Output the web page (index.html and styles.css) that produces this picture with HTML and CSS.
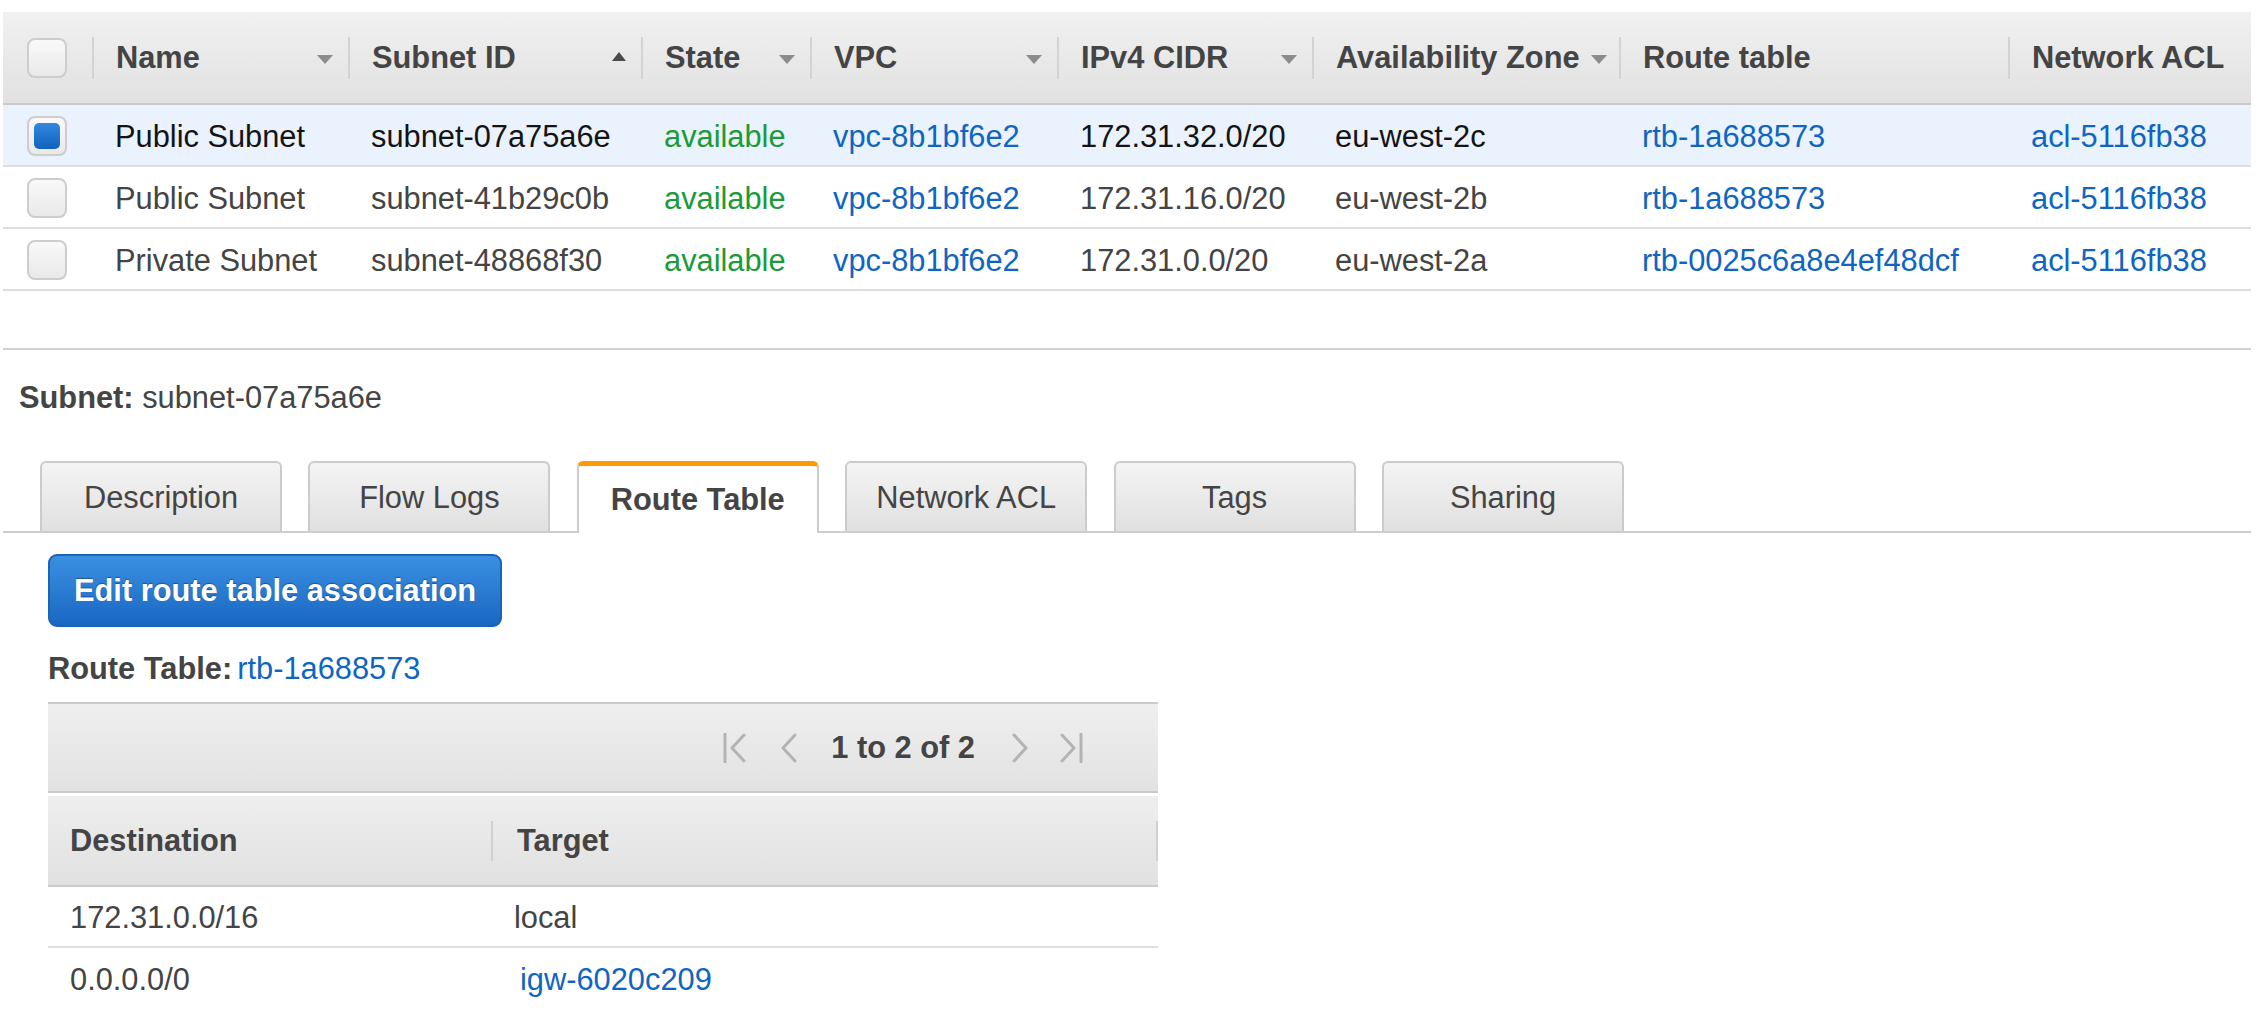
FILE: index.html
```html
<!DOCTYPE html>
<html lang="en">
<head>
<meta charset="utf-8">
<title>Subnets</title>
<link rel="stylesheet" href="styles.css">
</head>
<body>
<div class="grid">
  <div class="thead">
    <div class="cell-chk"><span class="chk"></span></div>
    <div class="th"><span>Name</span><span class="arr"></span></div>
    <div class="th"><span>Subnet ID</span><span class="arr up"></span></div>
    <div class="th"><span>State</span><span class="arr"></span></div>
    <div class="th"><span>VPC</span><span class="arr"></span></div>
    <div class="th"><span>IPv4 CIDR</span><span class="arr"></span></div>
    <div class="th az"><span>Availability Zone</span><span class="arr"></span></div>
    <div class="th"><span>Route table</span></div>
    <div class="th"><span>Network ACL</span></div>
  </div>
  <div class="tr selected">
    <div class="cell-chk"><span class="chk on"></span></div>
    <div class="td">Public Subnet</div>
    <div class="td">subnet-07a75a6e</div>
    <div class="td ok">available</div>
    <div class="td link">vpc-8b1bf6e2</div>
    <div class="td">172.31.32.0/20</div>
    <div class="td">eu-west-2c</div>
    <div class="td link">rtb-1a688573</div>
    <div class="td link">acl-5116fb38</div>
  </div>
  <div class="tr">
    <div class="cell-chk"><span class="chk"></span></div>
    <div class="td">Public Subnet</div>
    <div class="td">subnet-41b29c0b</div>
    <div class="td ok">available</div>
    <div class="td link">vpc-8b1bf6e2</div>
    <div class="td">172.31.16.0/20</div>
    <div class="td">eu-west-2b</div>
    <div class="td link">rtb-1a688573</div>
    <div class="td link">acl-5116fb38</div>
  </div>
  <div class="tr">
    <div class="cell-chk"><span class="chk"></span></div>
    <div class="td">Private Subnet</div>
    <div class="td">subnet-48868f30</div>
    <div class="td ok">available</div>
    <div class="td link">vpc-8b1bf6e2</div>
    <div class="td">172.31.0.0/20</div>
    <div class="td">eu-west-2a</div>
    <div class="td link">rtb-0025c6a8e4ef48dcf</div>
    <div class="td link">acl-5116fb38</div>
  </div>
</div>

<div class="divider"></div>

<div class="subnet-title"><b>Subnet:</b> subnet-07a75a6e</div>

<div class="tabs">
  <div class="tab">Description</div>
  <div class="tab">Flow Logs</div>
  <div class="tab active">Route Table</div>
  <div class="tab">Network ACL</div>
  <div class="tab">Tags</div>
  <div class="tab">Sharing</div>
</div>

<div class="pane">
  <button class="btn">Edit route table association</button>
  <div class="rt-label"><b>Route Table:</b><a class="link">rtb-1a688573</a></div>

  <div class="routes">
    <div class="pager">
      <svg class="pg first" width="24" height="30" viewBox="0 0 24 30"><line x1="2" y1="1" x2="2" y2="29"/><polyline points="21,2 9,15 21,28"/></svg>
      <svg class="pg prev" width="18" height="30" viewBox="0 0 18 30"><polyline points="16,2 4,15 16,28"/></svg>
      <span class="pg-text">1 to 2 of 2</span>
      <svg class="pg next" width="18" height="30" viewBox="0 0 18 30"><polyline points="2,2 14,15 2,28"/></svg>
      <svg class="pg last" width="24" height="30" viewBox="0 0 24 30"><polyline points="3,2 15,15 3,28"/><line x1="22" y1="1" x2="22" y2="29"/></svg>
    </div>
    <div class="rhead">
      <div class="rth first">Destination</div>
      <div class="rth second">Target</div>
    </div>
    <div class="rtr">
      <div class="rtd first">172.31.0.0/16</div>
      <div class="rtd second">local</div>
    </div>
    <div class="rtr last">
      <div class="rtd first">0.0.0.0/0</div>
      <div class="rtd second"><a class="link igw">igw-6020c209</a></div>
    </div>
  </div>
</div>
</body>
</html>
```

FILE: styles.css
```css
* { box-sizing: border-box; }

body {
  margin: 0;
  font-family: "Liberation Sans", Arial, Helvetica, sans-serif;
  font-size: 30.8px;
  color: #444;
  background: #fff;
}

.link { color: #0f65c2; text-decoration: none; }

/* ---------- subnets grid ---------- */
.grid {
  --cols: 89px 256px 293px 169px 247px 255px 307px 389px 243px;
  width: 2248px;
  margin: 12px 0 0 3px;
}

.thead, .tr {
  display: grid;
  grid-template-columns: var(--cols);
  align-items: center;
}

.thead {
  height: 93px;
  background: linear-gradient(#f1f1f1, #e1e1e1);
  border-bottom: 2px solid #cacaca;
  font-weight: bold;
  padding-top: 1px;
}

.tr {
  height: 62px;
  border-bottom: 2px solid #dedede;
  padding-top: 3px;
}

.tr.selected { background: #eaf2fd; color: #141414; }

.cell-chk {
  padding-left: 24px;
  display: flex;
  align-items: center;
}

.tr .cell-chk { margin-top: -1px; }

.chk {
  display: block;
  width: 40px;
  height: 40px;
  border: 2px solid #cdcdcd;
  border-radius: 8px;
  background: linear-gradient(#f9f9f9, #e9e9e9);
}

.chk.on {
  padding: 5px;
}

.chk.on::after {
  content: "";
  display: block;
  width: 100%;
  height: 100%;
  border-radius: 5px;
  background: linear-gradient(#3389de, #1161bf);
}

.th {
  height: 42px;
  display: flex;
  align-items: center;
  justify-content: space-between;
  border-left: 2px solid #d3d3d3;
  padding: 0 15px 0 22px;
  white-space: nowrap;
  overflow: hidden;
}

.th.az { padding-right: 12px; }

.arr {
  flex: none;
  width: 0;
  height: 0;
  border-left: 8px solid transparent;
  border-right: 8px solid transparent;
  border-top: 9px solid #8c8c8c;
  margin-top: 3px;
}

.arr.up {
  border-top: none;
  border-bottom: 9px solid #4a4a4a;
  border-left-width: 7px;
  border-right-width: 7px;
  margin-top: -4px;
}

.td {
  padding-left: 23px;
  white-space: nowrap;
  overflow: hidden;
}

.td.ok { color: #1a9b36; }
.td.link { color: #0f65c2; }

/* ---------- details ---------- */
.divider {
  width: 2248px;
  height: 2px;
  margin: 57px 0 0 3px;
  background: #d2d2d2;
}

.subnet-title {
  margin-top: 30px;
  padding-left: 19px;
  line-height: 36px;
}

.subnet-title b { color: #444; }

.tabs {
  width: 2248px;
  margin: 45px 0 0 3px;
  padding-left: 37px;
  display: flex;
  align-items: flex-end;
  gap: 26.4px;
  border-bottom: 2px solid #cdcdcd;
  height: 72px;
}

.tab {
  width: 242px;
  height: 70px;
  border: 2px solid #cbcbcb;
  border-bottom: none;
  border-radius: 6px 6px 0 0;
  background: linear-gradient(#f4f4f4, #e0e0e0);
  display: flex;
  align-items: center;
  justify-content: center;
  padding-top: 2px;
  color: #444;
}

.tab.active {
  height: 72px;
  margin-bottom: -2px;
  background: #fff;
  border-top: 5px solid #ff9900;
  border-left: 2px solid #cbcbcb;
  border-right: 2px solid #cbcbcb;
  font-weight: bold;
  padding-top: 0;
}

.pane {
  padding: 21px 0 0 48px;
}

.btn {
  display: block;
  height: 73px;
  padding: 0 24px;
  border: 2px solid #1b63b6;
  border-radius: 9px;
  background: linear-gradient(#3b90e1, #1967c3);
  color: #fff;
  font-family: inherit;
  font-size: 30.8px;
  font-weight: bold;
  text-shadow: 0 -1px 1px rgba(0, 0, 0, 0.35);
}

.rt-label {
  margin-top: 24px;
  line-height: 36px;
}

.rt-label b { margin-right: 5px; }

.routes {
  width: 1110px;
  margin-top: 15px;
}

.pager {
  height: 91px;
  border-top: 2px solid #cbcbcb;
  border-bottom: 2px solid #cbcbcb;
  background: linear-gradient(#efefef, #e2e2e2);
  display: flex;
  justify-content: flex-end;
  align-items: center;
  padding-right: 75px;
}

.pg {
  fill: none;
  stroke: #b3b3b3;
  stroke-width: 3;
  stroke-linecap: round;
  stroke-linejoin: round;
}

.pg.prev { margin-left: 32px; }
.pg-text { margin-left: 34px; font-weight: bold; color: #444; }
.pg.next { margin-left: 37px; }
.pg.last { margin-left: 29px; }

.rhead {
  margin-top: 3px;
  height: 91px;
  display: grid;
  grid-template-columns: 443px 667px;
  align-items: center;
  background: linear-gradient(#eeeeee, #e1e1e1);
  border-bottom: 2px solid #cbcbcb;
  font-weight: bold;
}

.rth {
  height: 40px;
  display: flex;
  align-items: center;
}

.rth.first { padding-left: 22px; }
.rth.second {
  padding-left: 24px;
  border-left: 2px solid #d0d0d0;
  border-right: 2px solid #d0d0d0;
}

.rtr {
  height: 61px;
  display: grid;
  grid-template-columns: 443px 667px;
  align-items: center;
  border-bottom: 2px solid #dedede;
  padding-top: 2px;
}

.rtr.last { border-bottom: none; }

.rtd.first { padding-left: 22px; }
.rtd.second { padding-left: 23px; }

.igw { margin-left: 6px; }
```
